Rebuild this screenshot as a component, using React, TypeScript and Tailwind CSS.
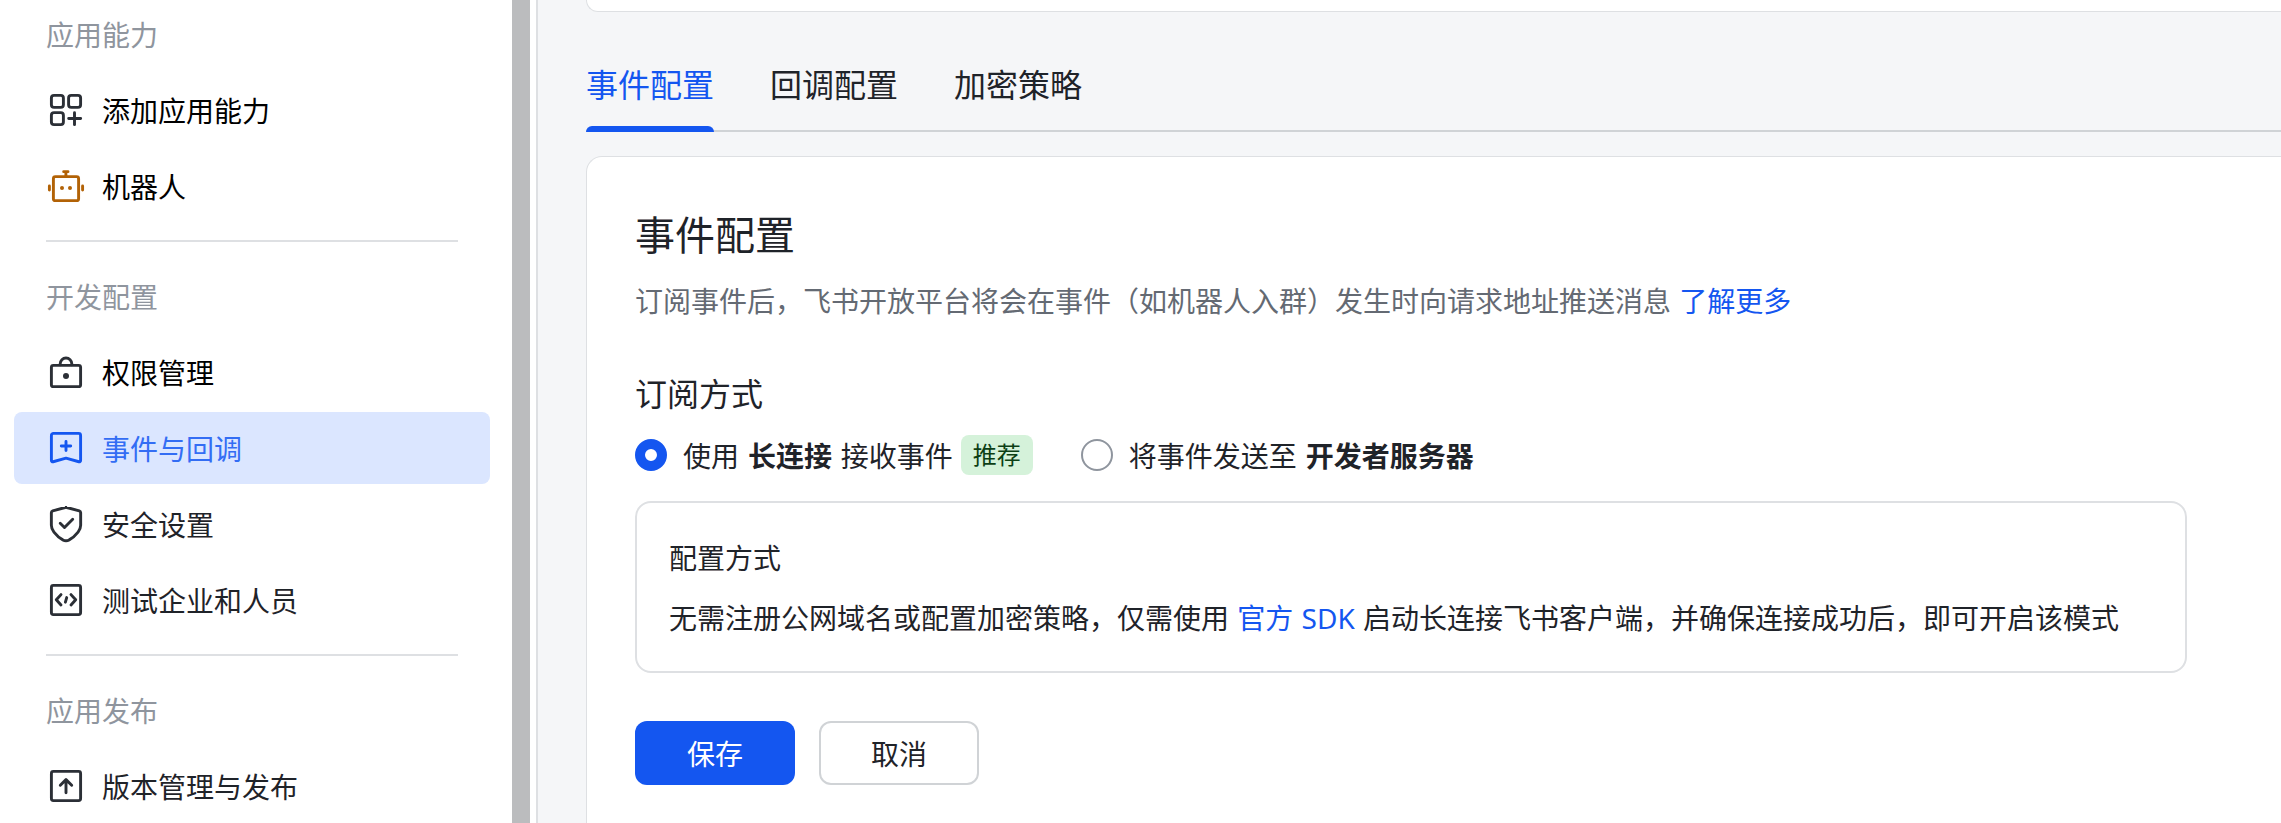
import React, { useState } from 'react';

const IconBase: React.FC<{ children: React.ReactNode }> = ({ children }) => (
  <svg
    className="w-10 h-10 shrink-0"
    viewBox="0 0 40 40"
    fill="none"
    stroke="currentColor"
    strokeWidth="2.9"
    strokeLinecap="round"
    strokeLinejoin="round"
  >
    {children}
  </svg>
);

const Icons = {
  AddAbility: (
    <IconBase>
      <rect x="5.4" y="5.4" width="12" height="12" rx="2.67" />
      <rect x="22.6" y="5.4" width="12" height="12" rx="2.67" />
      <rect x="5.4" y="22.6" width="12" height="12" rx="2.67" />
      <path d="M28.5 22.67v12M22.67 28.5h12" />
    </IconBase>
  ),
  Robot: (
    <IconBase>
      <rect x="7.4" y="10.67" width="25.2" height="24" rx="2" />
      <path d="M17.67 5.67h4.33M19.9 6v4" />
      <path d="M3.4 20v4M36.6 20v4" />
      <circle cx="16" cy="22" r="2" fill="currentColor" stroke="none" />
      <circle cx="24" cy="22" r="2" fill="currentColor" stroke="none" />
    </IconBase>
  ),
  Lock: (
    <IconBase>
      <rect x="5.4" y="13.33" width="29.2" height="21.33" rx="2" />
      <path d="M14.2 12.8v-1a5.8 5.8 0 0 1 11.6 0v1" />
      <circle cx="20" cy="24" r="3" fill="currentColor" stroke="none" />
    </IconBase>
  ),
  Event: (
    <IconBase>
      <path d="M5.4 7.4a2 2 0 0 1 2-2h25.2a2 2 0 0 1 2 2v25.1a1.3 1.3 0 0 1-1.7 1.25L20 30.2 7.1 33.75a1.3 1.3 0 0 1-1.7-1.25z" />
      <path d="M20 13.5v9M15.3 18h9.4" />
    </IconBase>
  ),
  Shield: (
    <IconBase>
      <path d="M19.2 3.5a2.6 2.6 0 0 1 1.6 0l12.5 3.3a2 2 0 0 1 1.36 1.9v12.6c0 2.6-.9 4.7-2.6 6.8-2.6 3.3-5.4 6-8.9 7.8a6.6 6.6 0 0 1-6.3 0c-3.5-1.8-6.3-4.5-8.9-7.8-1.7-2.1-2.6-4.2-2.6-6.8V8.7A2 2 0 0 1 6.7 6.8z" />
      <path d="M14.2 19.2l4.3 4.3 8.2-8.2" />
    </IconBase>
  ),
  Code: (
    <IconBase>
      <rect x="5.4" y="5.4" width="29.2" height="29.2" rx="2" />
      <path d="M15 14.6L10.3 19.8l4.7 5.2M25 14.6l4.7 5.2L25 25M20.7 17.6l-1.3 4.6" />
    </IconBase>
  ),
  Publish: (
    <IconBase>
      <rect x="5.4" y="5.4" width="29.2" height="29.2" rx="2" />
      <path d="M20 26.8V13.8M14.3 19.3L20 13.6l5.7 5.7" />
    </IconBase>
  )
};

interface NavItem {
  label: string;
  icon: React.ReactNode;
  iconColor?: string;
  textColor?: string;
}

interface NavGroup {
  title: string;
  items: NavItem[];
}

const NAV_GROUPS: NavGroup[] = [
  {
    title: '应用能力',
    items: [
      { label: '添加应用能力', icon: Icons.AddAbility, textColor: 'text-black' },
      { label: '机器人', icon: Icons.Robot, iconColor: 'text-[#b26206]', textColor: 'text-black' }
    ]
  },
  {
    title: '开发配置',
    items: [
      { label: '权限管理', icon: Icons.Lock, textColor: 'text-black' },
      { label: '事件与回调', icon: Icons.Event },
      { label: '安全设置', icon: Icons.Shield },
      { label: '测试企业和人员', icon: Icons.Code }
    ]
  },
  {
    title: '应用发布',
    items: [{ label: '版本管理与发布', icon: Icons.Publish }]
  }
];

const TABS = ['事件配置', '回调配置', '加密策略'];

const Sidebar: React.FC = () => {
  const [active, setActive] = useState('事件与回调');

  return (
    <aside className="flex w-[538px] shrink-0 border-r-2 border-[#dee0e3] bg-white">
      <nav className="-mt-0.5 w-[512px] pl-3.5 pr-[22px]">
        {NAV_GROUPS.map((group, i) => (
          <div key={group.title}>
            {i > 0 && <div className="mx-8 my-[18px] h-0.5 bg-[#dee0e3]" />}
            <div className="flex h-[72px] items-center px-8 pt-0.5 text-[#8f959e]">{group.title}</div>
            <div className="mt-1 flex flex-col gap-1">
              {group.items.map(item => {
                const selected = item.label === active;
                return (
                  <button
                    key={item.label}
                    onClick={() => setActive(item.label)}
                    className={`flex h-[72px] items-center gap-4 rounded-lg px-8 ${selected ? 'bg-[#dbe6ff]' : ''}`}
                  >
                    <span className={selected ? 'text-[#1456f0]' : item.iconColor || 'text-[#2b2f36]'}>{item.icon}</span>
                    <span className={`pt-0.5 ${selected ? 'text-[#336df4]' : item.textColor || 'text-[#1f2329]'}`}>
                      {item.label}
                    </span>
                  </button>
                );
              })}
            </div>
          </div>
        ))}
      </nav>
      {/* scrollbar thumb */}
      <div className="w-[18px] bg-[#bbbcbe]" />
    </aside>
  );
};

interface RadioProps {
  checked: boolean;
  onSelect: () => void;
  children: React.ReactNode;
}

const Radio: React.FC<RadioProps> = ({ checked, onSelect, children }) => (
  <button onClick={onSelect} className="flex h-10 items-center gap-4">
    <span className={`h-8 w-8 rounded-full bg-white ${checked ? 'border-[10px] border-[#1456f0]' : 'border-2 border-[#8f959e]'}`} />
    <span className="flex items-center gap-2 whitespace-nowrap [word-spacing:1.6px]">{children}</span>
  </button>
);

export default function App() {
  const [tab, setTab] = useState(TABS[0]);
  const [mode, setMode] = useState<'socket' | 'server'>('socket');

  return (
    <div className="flex h-[823px] w-full overflow-hidden bg-[#f5f6f8] font-['Noto_Sans','Noto_Sans_CJK_SC',sans-serif] text-[28px] leading-10 text-[#1f2329] [word-spacing:1px]">
      <Sidebar />

      <main className="flex min-w-0 flex-1 flex-col pl-12">
        <div className="h-3 shrink-0 rounded-bl-2xl border-b border-l border-[#dee0e3] bg-white" />

        <div className="mt-[38px] flex h-[82px] shrink-0 gap-14 border-b-2 border-[#d0d3d6] text-[32px]">
          {TABS.map(name => (
            <button
              key={name}
              onClick={() => setTab(name)}
              className={`-mb-0.5 flex flex-col justify-between ${name === tab ? 'text-[#1456f0]' : ''}`}
            >
              <span className="leading-[70px]">{name}</span>
              {name === tab && <span className="h-1.5 w-full rounded-t-md bg-[#1456f0]" />}
            </button>
          ))}
        </div>

        <section className="mt-6 flex-1 rounded-tl-2xl border-l border-t border-[#dee0e3] bg-white pl-12 pr-[94px] pt-12">
          <h1 className="text-[40px] leading-[60px]">事件配置</h1>
          <p className="mt-4 text-[#646a73]">
            订阅事件后，飞书开放平台将会在事件（如机器人入群）发生时向请求地址推送消息{' '}
            <a className="text-[#1456f0]">了解更多</a>
          </p>

          <h2 className="mt-[49px] text-[32px] leading-[48px]">订阅方式</h2>
          <div className="mt-[17px] flex gap-12">
            <Radio checked={mode === 'socket'} onSelect={() => setMode('socket')}>
              <span className="pt-0.5">
                使用 <b>长连接</b> 接收事件
              </span>
              <span className="rounded-lg bg-[#d5f2da] px-3 text-2xl leading-10 text-[#0c3f15]">推荐</span>
            </Radio>
            <Radio checked={mode === 'server'} onSelect={() => setMode('server')}>
              <span className="pt-0.5">
                将事件发送至 <b>开发者服务器</b>
              </span>
            </Radio>
          </div>

          <div className="mt-[26px] flex h-[172px] flex-col justify-center gap-5 rounded-2xl border-2 border-[#dee0e3] px-8 pt-0.5">
            <p>配置方式</p>
            <p className="whitespace-nowrap">
              无需注册公网域名或配置加密策略，仅需使用 <a className="text-[#1456f0]">官方 SDK</a>{' '}
              启动长连接飞书客户端，并确保连接成功后，即可开启该模式
            </p>
          </div>

          <div className="mt-12 flex gap-6">
            <button className="h-16 w-40 rounded-xl bg-[#1456f0] pt-0.5 text-white">保存</button>
            <button className="h-16 w-40 rounded-xl border-2 border-[#d0d3d6] bg-white pt-0.5">取消</button>
          </div>
        </section>
      </main>
    </div>
  );
}
